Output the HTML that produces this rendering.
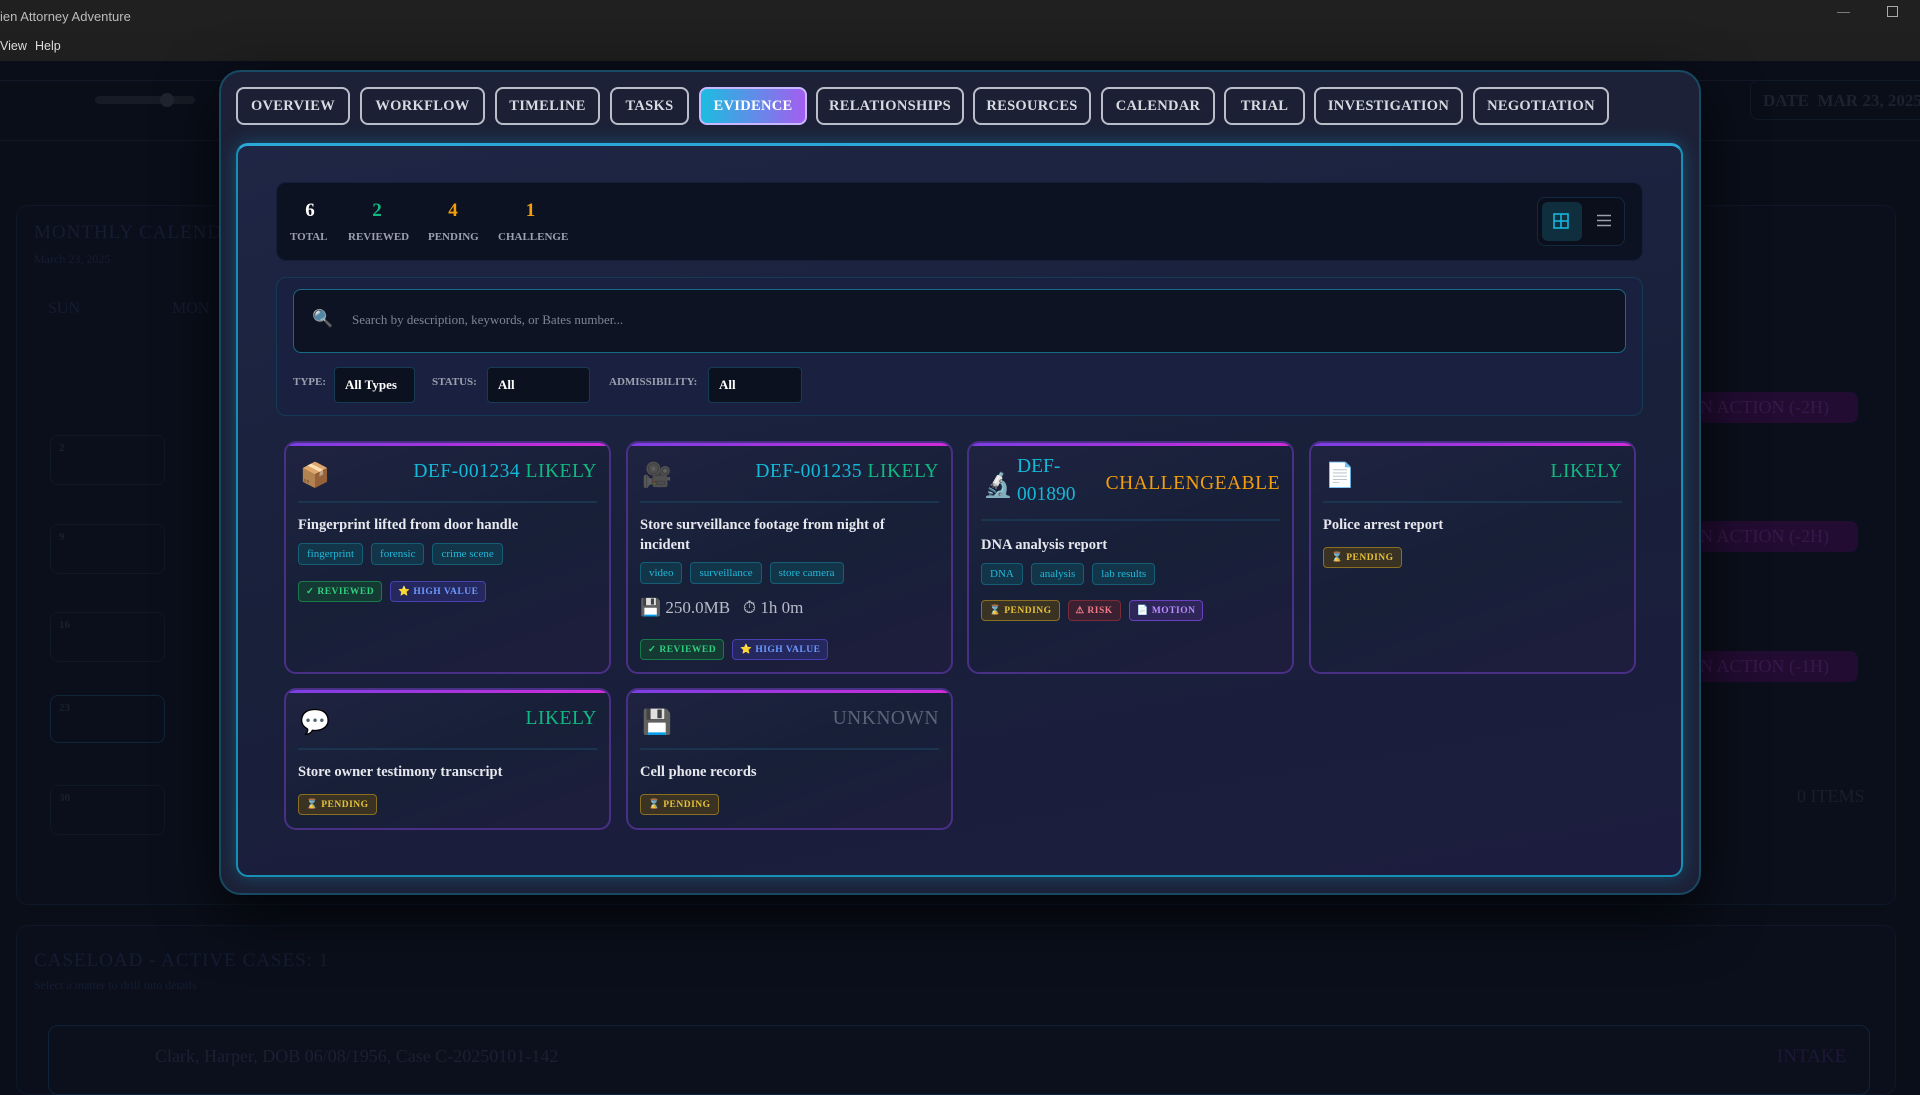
<!DOCTYPE html>
<html><head><meta charset="utf-8"><style>
*{box-sizing:border-box;margin:0;padding:0}
body{width:1920px;height:1080px;overflow:hidden;background:#0a0e1a;font-family:"Liberation Serif",serif;position:relative;color:#e5e7eb}
.abs{position:absolute}
.titlebar{left:0;top:0;width:1920px;height:31px;background:#202020;color:#bbb;font-family:"Liberation Sans",sans-serif;font-size:13px;padding:9px 0 0 0}
.menubar{left:0;top:31px;width:1920px;height:30px;background:#1f1f1f;color:#ddd;font-family:"Liberation Sans",sans-serif;font-size:12.5px}
.dim{color:#131e33}
.tab{position:absolute;top:87px;height:38px;border:2px solid #b9bec8;border-radius:8px;color:#d7dbe2;font-weight:bold;font-size:14.5px;display:flex;align-items:center;justify-content:center;background:#1b2035;letter-spacing:.3px}
.tab.on{background:linear-gradient(90deg,#1bbde0,#a35ef0);color:#fff;border-color:#c9b7ff}
.card{position:absolute;border:2px solid #4a2f86;border-radius:12px;background:linear-gradient(160deg,#1f2340 0%,#172038 50%,#1e1d3d 100%);overflow:hidden}
.card:before{content:"";position:absolute;left:0;top:0;right:0;height:3px;background:linear-gradient(90deg,#7b3fe4,#d12bd9)}
.hdr{position:absolute;left:12px;right:12px;top:12px;height:48px;border-bottom:2px solid #1b3550}
.ico{position:absolute;left:2px;top:6px;font-size:24px;font-family:"DejaVu Sans",sans-serif}
.code{position:absolute;right:0;top:6px;font-size:19.5px;letter-spacing:.5px;white-space:nowrap}
.desc{position:absolute;left:12px;top:72px;right:12px;font-weight:bold;font-size:14.5px;color:#e6e8ee;line-height:20px}
.tags{position:absolute;left:12px;display:flex;gap:8px}
.tag{border:1.5px solid #155e75;background:#12354a;color:#22b8d8;border-radius:4px;font-size:11px;padding:4px 8px}
.badges{position:absolute;left:12px;display:flex;gap:8px}
.b{border:1.5px solid;border-radius:4px;font-size:9.5px;font-weight:bold;padding:4px 7px;letter-spacing:.5px}
.rev{border-color:#177a4a;background:#143a33;color:#2fd07f}
.hv{border-color:#4a3fb0;background:#25275f;color:#6b9bff}
.pen{border-color:#8a6e22;background:#3a3323;color:#e7c13a}
.risk{border-color:#7a2b3a;background:#3a2030;color:#f07a8a}
.mot{border-color:#6a3fc0;background:#2e2558;color:#b98cff}
.cyan{color:#14b8d8}.green{color:#10b981}.orange{color:#f59e0b}.gray{color:#5b6478}
.pill{left:1690px;width:168px;height:31px;border-radius:8px;background:#220c31;color:#37184b;font-size:18px;padding:5px 10px}
</style></head><body>
<div class="abs titlebar"><span>ien Attorney Adventure</span><span style="position:absolute;right:70px;top:4px;color:#888">—</span><span style="position:absolute;right:22px;top:6px;width:11px;height:11px;border:1px solid #aaa"></span></div>
<div class="abs menubar"><span style="position:absolute;left:0;top:8px">View</span><span style="position:absolute;left:35px;top:8px">Help</span></div>
<div class="abs" style="left:0;top:61px;width:1920px;height:1019px;background:#0a0e19"></div>
<div class="abs" style="left:0;top:80px;width:1920px;height:1px;background:#111827"></div>
<div class="abs" style="left:0;top:140px;width:1920px;height:1px;background:#111827"></div>
<div class="abs" style="left:95px;top:96px;width:100px;height:8px;border-radius:4px;background:#171b25"></div>
<div class="abs" style="left:160px;top:93px;width:14px;height:14px;border-radius:7px;background:#20242e"></div>
<div class="abs" style="left:1750px;top:80px;width:200px;height:40px;border:1px solid #111a28;border-radius:8px;color:#1c2230;font-size:17px;padding:10px 12px;font-weight:bold">DATE&nbsp; MAR 23, 2025</div>
<div class="abs" style="left:16px;top:205px;width:1880px;height:700px;border:1px solid #0e1828;border-radius:12px;background:#0b0f1b"></div>
<div class="abs dim" style="left:34px;top:222px;font-size:19px;letter-spacing:1px">MONTHLY CALENDAR</div>
<div class="abs dim" style="left:34px;top:252px;font-size:12px">March 23, 2025</div>
<div class="abs dim" style="left:48px;top:300px;font-size:16px">SUN</div>
<div class="abs dim" style="left:172px;top:300px;font-size:16px">MON</div>
<div class="abs" style="left:50px;top:435px;width:115px;height:50px;border:1px solid #0f1826;border-radius:8px;color:#1b202e;font-size:11px;padding:6px 8px;font-weight:bold">2</div>
<div class="abs" style="left:50px;top:524px;width:115px;height:50px;border:1px solid #0f1826;border-radius:8px;color:#1b202e;font-size:11px;padding:6px 8px;font-weight:bold">9</div>
<div class="abs" style="left:50px;top:612px;width:115px;height:50px;border:1px solid #0f1826;border-radius:8px;color:#1b202e;font-size:11px;padding:6px 8px;font-weight:bold">16</div>
<div class="abs" style="left:50px;top:695px;width:115px;height:48px;border:1px solid #112538;border-radius:8px;color:#1b202e;font-size:11px;padding:6px 8px;font-weight:bold">23</div>
<div class="abs" style="left:50px;top:785px;width:115px;height:50px;border:1px solid #0f1826;border-radius:8px;color:#1b202e;font-size:11px;padding:6px 8px;font-weight:bold">30</div>
<div class="abs pill" style="top:392px">N ACTION (-2H)</div>
<div class="abs pill" style="top:521px">N ACTION (-2H)</div>
<div class="abs pill" style="top:651px">N ACTION (-1H)</div>
<div class="abs" style="left:1797px;top:786px;color:#181e2c;font-size:18px">0 ITEMS</div>
<div class="abs" style="left:16px;top:925px;width:1880px;height:170px;border:1px solid #0e1828;border-radius:12px;background:#0b0f1b"></div>
<div class="abs dim" style="left:34px;top:950px;font-size:19px;letter-spacing:1px">CASELOAD - ACTIVE CASES: 1</div>
<div class="abs dim" style="left:34px;top:978px;font-size:12px">Select a matter to drill into details</div>
<div class="abs" style="left:48px;top:1025px;width:1822px;height:70px;border:1px solid #10233a;border-radius:10px;background:#0c101c"></div>
<div class="abs" style="left:155px;top:1046px;color:#192134;font-size:18px">Clark, Harper, DOB 06/08/1956, Case C-20250101-142</div>
<div class="abs" style="left:1777px;top:1046px;color:#1f1638;font-size:19px">INTAKE</div>
<!-- modal -->
<div class="abs" style="left:219px;top:70px;width:1482px;height:825px;border:2px solid #184a63;border-radius:22px;background:#1c2137;box-shadow:0 20px 60px rgba(0,0,0,.7)"></div>
<div class="tab" style="left:236px;width:114px">OVERVIEW</div>
<div class="tab" style="left:360px;width:125px">WORKFLOW</div>
<div class="tab" style="left:495px;width:105px">TIMELINE</div>
<div class="tab" style="left:610px;width:79px">TASKS</div>
<div class="tab on" style="left:699px;width:108px">EVIDENCE</div>
<div class="tab" style="left:816px;width:148px">RELATIONSHIPS</div>
<div class="tab" style="left:973px;width:118px">RESOURCES</div>
<div class="tab" style="left:1101px;width:114px">CALENDAR</div>
<div class="tab" style="left:1224px;width:81px">TRIAL</div>
<div class="tab" style="left:1314px;width:149px">INVESTIGATION</div>
<div class="tab" style="left:1473px;width:136px">NEGOTIATION</div>
<div class="abs" style="left:236px;top:143px;width:1447px;height:734px;border:2px solid #1790b5;border-top:3px solid #2aa8d8;border-radius:12px;background:linear-gradient(170deg,#1f2645 0%,#18203a 50%,#1c1d3e 100%);box-shadow:0 0 18px rgba(20,160,210,.35)"></div>
<div class="abs" style="left:276px;top:182px;width:1367px;height:79px;border-radius:10px;background:#0d1222;border:1px solid #14203a"></div>
<div class="abs" style="left:292px;top:200px;width:36px;text-align:center;font-weight:bold;font-size:19px;color:#fff">6</div>
<div class="abs" style="left:290px;top:231px;font-size:11px;font-weight:bold;color:#9aa0ad">TOTAL</div>
<div class="abs" style="left:348px;top:200px;width:58px;text-align:center;font-weight:bold;font-size:19px"><span class="green">2</span></div>
<div class="abs" style="left:348px;top:231px;font-size:11px;font-weight:bold;color:#9aa0ad">REVIEWED</div>
<div class="abs" style="left:428px;top:200px;width:50px;text-align:center;font-weight:bold;font-size:19px"><span class="orange">4</span></div>
<div class="abs" style="left:428px;top:231px;font-size:11px;font-weight:bold;color:#9aa0ad">PENDING</div>
<div class="abs" style="left:498px;top:200px;width:65px;text-align:center;font-weight:bold;font-size:19px"><span class="orange">1</span></div>
<div class="abs" style="left:498px;top:231px;font-size:11px;font-weight:bold;color:#9aa0ad">CHALLENGE</div>
<div class="abs" style="left:1537px;top:197px;width:88px;height:49px;border:1.5px solid #13293f;border-radius:8px;background:#0b0f1c"></div>
<div class="abs" style="left:1542px;top:202px;width:40px;height:39px;border-radius:6px;background:#0f2e3e"></div>
<svg class="abs" style="left:1553px;top:213px" width="16" height="16"><rect x="1" y="1" width="14" height="14" fill="none" stroke="#16b6dc" stroke-width="1.6"/><line x1="8" y1="1" x2="8" y2="15" stroke="#16b6dc" stroke-width="1.6"/><line x1="1" y1="8" x2="15" y2="8" stroke="#16b6dc" stroke-width="1.6"/></svg>
<svg class="abs" style="left:1597px;top:214px" width="14" height="13"><path d="M0 1.5H14M0 6.5H14M0 11.5H14" stroke="#9aa0ad" stroke-width="1.6"/></svg>
<div class="abs" style="left:276px;top:277px;width:1367px;height:139px;border-radius:10px;background:#1a2140;border:1.5px solid #143a55"></div>
<div class="abs" style="left:293px;top:289px;width:1333px;height:64px;border-radius:8px;background:#0e1324;border:1.5px solid #166a86"></div>
<div class="abs" style="left:312px;top:309px;font-size:17px;font-family:'DejaVu Sans',sans-serif;color:#3a8aa0">🔍</div>
<div class="abs" style="left:352px;top:312px;font-size:13px;color:#7d8494">Search by description, keywords, or Bates number...</div>
<div class="abs" style="left:293px;top:376px;font-size:11px;font-weight:bold;color:#9aa0ad">TYPE:</div>
<div class="abs" style="left:334px;top:367px;width:81px;height:36px;border:1.5px solid #153b55;border-radius:4px;background:#0c1120;color:#fff;font-size:13px;font-weight:bold;padding:9px 10px">All Types</div>
<div class="abs" style="left:432px;top:376px;font-size:11px;font-weight:bold;color:#9aa0ad">STATUS:</div>
<div class="abs" style="left:487px;top:367px;width:103px;height:36px;border:1.5px solid #153b55;border-radius:4px;background:#0c1120;color:#fff;font-size:13px;font-weight:bold;padding:9px 10px">All</div>
<div class="abs" style="left:609px;top:376px;font-size:11px;font-weight:bold;color:#9aa0ad">ADMISSIBILITY:</div>
<div class="abs" style="left:708px;top:367px;width:94px;height:36px;border:1.5px solid #153b55;border-radius:4px;background:#0c1120;color:#fff;font-size:13px;font-weight:bold;padding:9px 10px">All</div>
<!-- cards -->
<div class="card" style="left:284px;top:441px;width:327px;height:233px">
 <div class="hdr"><span class="ico">📦</span><span class="code"><span class="cyan">DEF-001234</span> <span class="green">LIKELY</span></span></div>
 <div class="desc">Fingerprint lifted from door handle</div>
 <div class="tags" style="top:100px"><span class="tag">fingerprint</span><span class="tag">forensic</span><span class="tag">crime scene</span></div>
 <div class="badges" style="top:138px"><span class="b rev">✓ REVIEWED</span><span class="b hv">⭐ HIGH VALUE</span></div>
</div>
<div class="card" style="left:626px;top:441px;width:327px;height:233px">
 <div class="hdr"><span class="ico">🎥</span><span class="code"><span class="cyan">DEF-001235</span> <span class="green">LIKELY</span></span></div>
 <div class="desc" style="right:40px">Store surveillance footage from night of incident</div>
 <div class="tags" style="top:119px"><span class="tag">video</span><span class="tag">surveillance</span><span class="tag">store camera</span></div>
 <div class="abs" style="left:12px;top:155px;font-size:17px;color:#b8bcc8"><span style="font-family:'DejaVu Sans',sans-serif">💾</span> 250.0MB &nbsp;&nbsp;<span style="font-family:'DejaVu Sans',sans-serif">⏱</span> 1h 0m</div>
 <div class="badges" style="top:196px"><span class="b rev">✓ REVIEWED</span><span class="b hv">⭐ HIGH VALUE</span></div>
</div>
<div class="card" style="left:967px;top:441px;width:327px;height:233px">
 <div class="hdr" style="height:66px"><span class="ico" style="top:16px">🔬</span><span class="abs cyan" style="left:36px;top:-2px;font-size:19.5px;line-height:28px">DEF-<br>001890</span><span class="code orange" style="top:18px">CHALLENGEABLE</span></div>
 <div class="desc" style="top:92px">DNA analysis report</div>
 <div class="tags" style="top:120px"><span class="tag">DNA</span><span class="tag">analysis</span><span class="tag">lab results</span></div>
 <div class="badges" style="top:157px"><span class="b pen">⌛ PENDING</span><span class="b risk">⚠ RISK</span><span class="b mot">📄 MOTION</span></div>
</div>
<div class="card" style="left:1309px;top:441px;width:327px;height:233px">
 <div class="hdr"><span class="ico">📄</span><span class="code green">LIKELY</span></div>
 <div class="desc">Police arrest report</div>
 <div class="badges" style="top:104px"><span class="b pen">⌛ PENDING</span></div>
</div>
<div class="card" style="left:284px;top:688px;width:327px;height:142px">
 <div class="hdr"><span class="ico">💬</span><span class="code green">LIKELY</span></div>
 <div class="desc">Store owner testimony transcript</div>
 <div class="badges" style="top:104px"><span class="b pen">⌛ PENDING</span></div>
</div>
<div class="card" style="left:626px;top:688px;width:327px;height:142px">
 <div class="hdr"><span class="ico">💾</span><span class="code gray">UNKNOWN</span></div>
 <div class="desc">Cell phone records</div>
 <div class="badges" style="top:104px"><span class="b pen">⌛ PENDING</span></div>
</div>
</body></html>
